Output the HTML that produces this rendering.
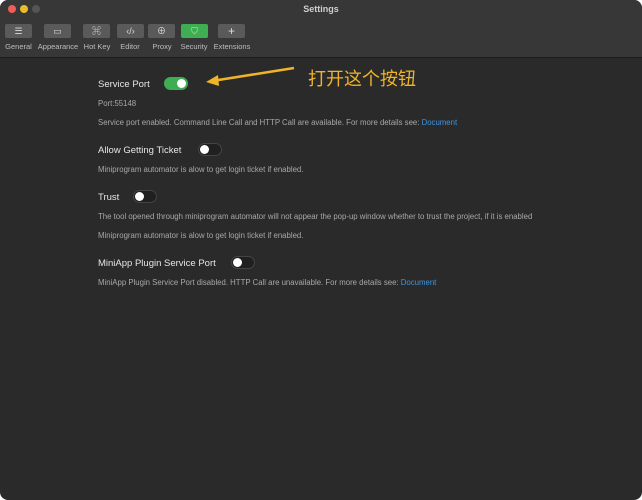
<!DOCTYPE html>
<html><head><style>
body{margin:0;width:642px;height:500px;background:#fff;font-family:"Liberation Sans","Noto Sans CJK SC",sans-serif;overflow:hidden}
.win{position:absolute;left:0;top:0;width:642px;height:500px;background:#2a2a2a;border-radius:8px;overflow:hidden}
.top{height:57px;background:#373737;border-bottom:1px solid #1c1c1c}
.title{position:absolute;top:4px;width:100%;text-align:center;color:#cfcfcf;font-size:9px;font-weight:bold}
.dot{position:absolute;top:5px;width:8px;height:8px;border-radius:50%}
.tb{position:absolute;top:24px;height:14px;background:#5a5a5a;border-radius:2px;color:#ddd;font-size:9px;text-align:center;line-height:14px}
.lb{position:absolute;top:42px;color:#bdbdbd;font-size:7.5px;text-align:center}
.h{position:absolute;left:98px;color:#e6e6e6;font-size:9.5px}
.s{position:absolute;left:98px;color:#a8a8a8;font-size:7.8px;white-space:nowrap}
.s a{color:#3b95e0}
.tg{position:absolute;width:24px;height:13px;border-radius:7px;background:#202020;border:1px solid #444;box-sizing:border-box}
.tg i{position:absolute;left:1px;top:1px;width:9px;height:9px;border-radius:50%;background:#fff}
.on{background:#3fae52;border-color:#3fae52}.on i{left:auto;right:1px}
</style></head><body><div class="win">
<div class="top"></div>
<div class="title">Settings</div>
<div class="dot" style="left:8px;background:#ec5f57"></div>
<div class="dot" style="left:20px;background:#e9bb2d"></div>
<div class="dot" style="left:32px;background:#555"></div>
<div class="tb" style="left:5px;width:27px">☰</div><div class="lb" style="left:0;width:37px">General</div>
<div class="tb" style="left:44px;width:27px">▭</div><div class="lb" style="left:36px;width:44px">Appearance</div>
<div class="tb" style="left:83px;width:27px">⌘</div><div class="lb" style="left:80px;width:34px">Hot Key</div>
<div class="tb" style="left:117px;width:27px">‹/›</div><div class="lb" style="left:114px;width:32px">Editor</div>
<div class="tb" style="left:148px;width:27px">⊕</div><div class="lb" style="left:146px;width:32px">Proxy</div>
<div class="tb" style="left:181px;width:27px;background:#3fae52">⛉</div><div class="lb" style="left:177px;width:34px">Security</div>
<div class="tb" style="left:218px;width:27px;font-size:12px">+</div><div class="lb" style="left:211px;width:42px">Extensions</div>

<div class="h" style="top:79px">Service Port</div><div class="tg on" style="left:164px;top:77px"><i></i></div>
<svg style="position:absolute;left:200px;top:64px" width="100" height="24"><line x1="94" y1="4" x2="12" y2="17" stroke="#f0b429" stroke-width="2.5"/><polygon points="6,18 18,11 19,22" fill="#f0b429"/></svg>
<div style="position:absolute;left:308px;top:65px;color:#f0b429;font-size:18px">打开这个按钮</div>
<div class="s" style="top:99px">Port:55148</div>
<div class="s" style="top:118px">Service port enabled. Command Line Call and HTTP Call are available. For more details see: <a>Document</a></div>
<div class="h" style="top:145px">Allow Getting Ticket</div><div class="tg" style="left:198px;top:143px"><i></i></div>
<div class="s" style="top:165px">Miniprogram automator is alow to get login ticket if enabled.</div>
<div class="h" style="top:192px">Trust</div><div class="tg" style="left:133px;top:190px"><i></i></div>
<div class="s" style="top:212px">The tool opened through miniprogram automator will not appear the pop-up window whether to trust the project, if it is enabled</div>
<div class="s" style="top:231px">Miniprogram automator is alow to get login ticket if enabled.</div>
<div class="h" style="top:258px">MiniApp Plugin Service Port</div><div class="tg" style="left:231px;top:256px"><i></i></div>
<div class="s" style="top:278px">MiniApp Plugin Service Port disabled. HTTP Call are unavailable. For more details see: <a>Document</a></div>
</div></body></html>
